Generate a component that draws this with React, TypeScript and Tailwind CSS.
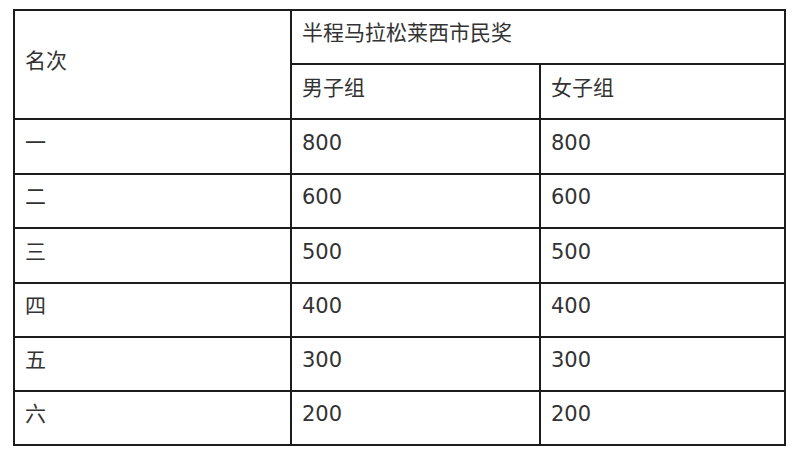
import React from "react";

const rows: [string, string, string, string][] = [
  ["一", "800", "800", "h-[55px]"],
  ["二", "600", "600", "h-[54px]"],
  ["三", "500", "500", "h-[55px]"],
  ["四", "400", "400", "h-[54px]"],
  ["五", "300", "300", "h-[54px]"],
  ["六", "200", "200", "h-[54px]"],
];

const cell = "border-2 border-[#1c1c1c] pl-[10px] pb-[6px] align-middle text-left font-normal";

export default function App() {
  return (
    <div
      className="w-[800px] h-[456px] bg-white pt-[9px] pl-[13px] text-[#333] text-[21px]"
      style={{ fontFamily: '"DejaVu Sans", "Noto Sans CJK SC", sans-serif' }}
    >
      <table className="border-collapse table-fixed w-[771px]">
        <colgroup>
          <col className="w-[277px]" />
          <col className="w-[249px]" />
          <col className="w-[245px]" />
        </colgroup>
        <tbody>
          <tr className="h-[54px]">
            <td rowSpan={2} className={cell}>名次</td>
            <td colSpan={2} className={cell}>半程马拉松莱西市民奖</td>
          </tr>
          <tr className="h-[55px]">
            <td className={cell}>男子组</td>
            <td className={cell}>女子组</td>
          </tr>
          {rows.map((r) => (
            <tr key={r[0]} className={r[3]}>
              <td className={cell}>{r[0]}</td>
              <td className={cell}>{r[1]}</td>
              <td className={cell}>{r[2]}</td>
            </tr>
          ))}
        </tbody>
      </table>
    </div>
  );
}
